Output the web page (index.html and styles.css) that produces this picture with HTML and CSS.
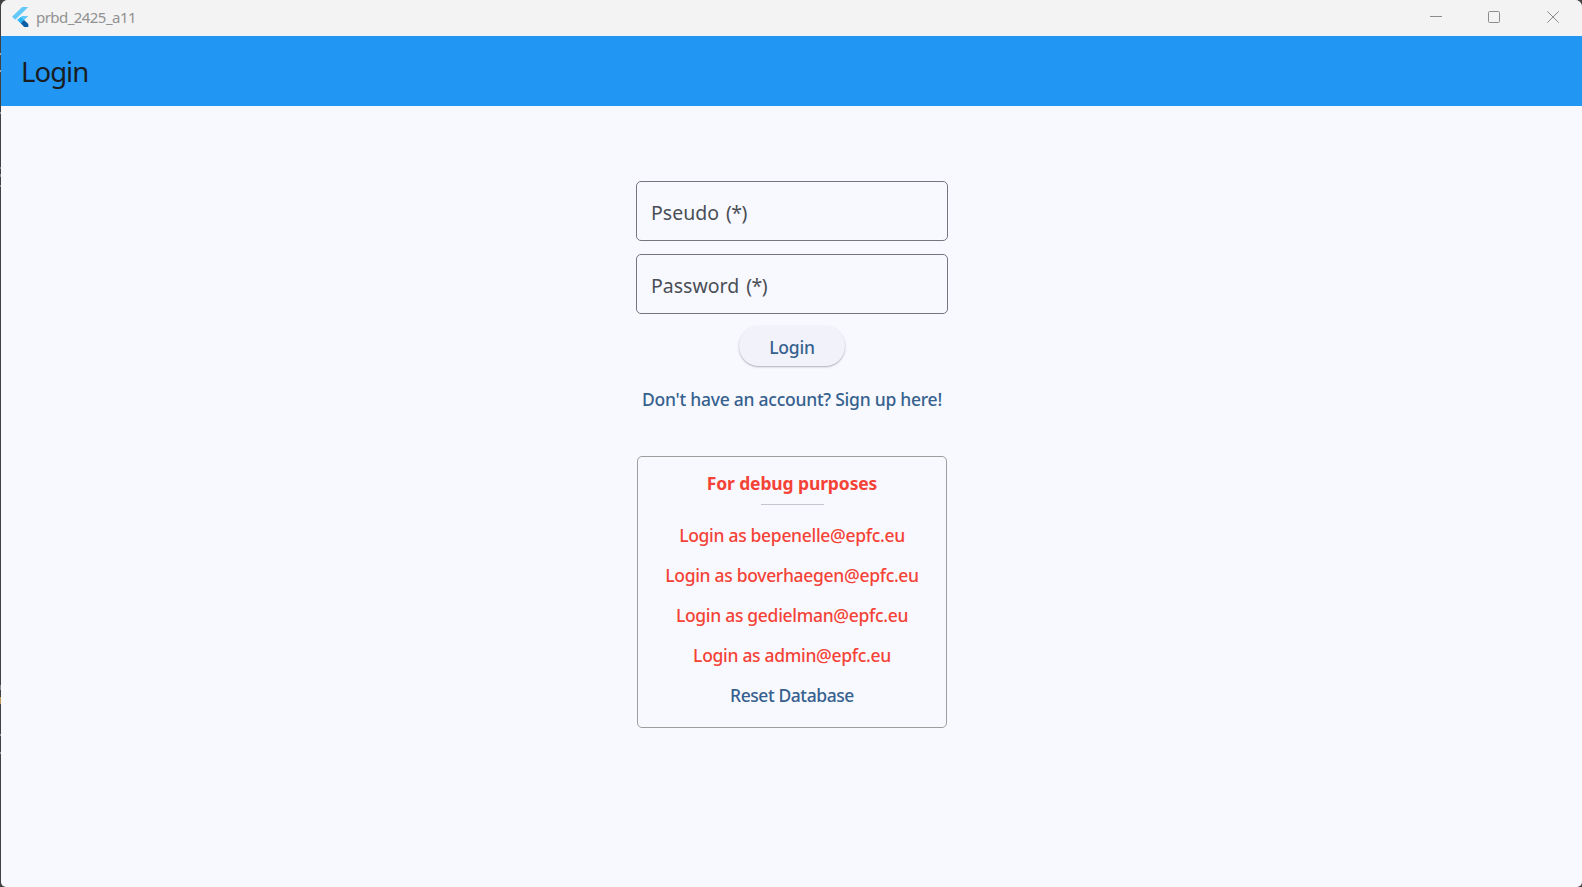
FILE: index.html
```html
<!DOCTYPE html>
<html lang="en">
<head>
<meta charset="utf-8">
<title>prbd_2425_a11</title>
<link rel="stylesheet" href="styles.css">
</head>
<body>
<div class="window">
  <header class="titlebar">
    <svg class="logo" width="17" height="20" viewBox="0 0 17 20">
      <path d="M10.2 0H16.3L3.3 12.8L0 9.8Z" fill="#62c9f8"/>
      <path d="M10.2 9H16.3L8.8 16.2L5.4 13Z" fill="#62c9f8"/>
      <path d="M5.4 13L8.7 9.9L12 13L8.7 16.2Z" fill="#29b6f6"/>
      <path d="M8.7 16.2L12 13L16.3 17V20H12.2Z" fill="#0a5fa5"/>
    </svg>
    <span class="app-name">prbd_2425_a11</span>
    <div class="controls">
      <svg width="12" height="12" viewBox="0 0 12 12"><path d="M0 5.5H12"/></svg>
      <svg width="12" height="12" viewBox="0 0 12 12"><rect x=".5" y=".5" width="11" height="11" rx="1.2"/></svg>
      <svg class="close" width="12" height="12" viewBox="0 0 12 12"><path d="M.3.3L11.7 11.7M11.7.3L.3 11.7"/></svg>
    </div>
  </header>
  <div class="appbar"><h1 class="heading">Login</h1></div>
  <main class="content">
    <div class="field">Pseudo <span class="mark">(*)</span></div>
    <div class="field">Password <span class="mark">(*)</span></div>
    <button class="login">Login</button>
    <a class="signup">Don't have an account? Sign up here!</a>
    <section class="debug">
      <h2 class="debug-title">For debug purposes</h2>
      <hr class="divider">
      <a class="row">Login as bepenelle@epfc.eu</a>
      <a class="row">Login as boverhaegen@epfc.eu</a>
      <a class="row">Login as gedielman@epfc.eu</a>
      <a class="row">Login as admin@epfc.eu</a>
      <a class="row reset">Reset Database</a>
    </section>
  </main>
</div>
</body>
</html>
```
FILE: styles.css
```css
* { box-sizing: border-box; }
body {
  margin: 0;
  height: 887px;
  padding-left: 1px;
  overflow: hidden;
  /* desktop behind the window, with a few light flecks along the left edge */
  background:
    linear-gradient(#aaa, #aaa) 0 53px / 1px 2px no-repeat,
    linear-gradient(#aaa, #aaa) 0 70px / 1px 2px no-repeat,
    linear-gradient(#999, #999) 0 112px / 1px 2px no-repeat,
    linear-gradient(#888, #888) 0 167px / 1px 2px no-repeat,
    linear-gradient(#888, #888) 0 174px / 1px 3px no-repeat,
    linear-gradient(#888, #888) 0 185px / 1px 2px no-repeat,
    linear-gradient(#888, #888) 0 685px / 1px 5px no-repeat,
    linear-gradient(#c09a58, #c09a58) 0 697px / 1px 7px no-repeat,
    linear-gradient(#999, #999) 0 734px / 1px 2px no-repeat,
    linear-gradient(#999, #999) 0 752px / 1px 2px no-repeat,
    #414143;
  font-family: "Noto Sans", "Open Sans", sans-serif;
}
.window {
  height: 887px;
  display: flex;
  flex-direction: column;
  overflow: hidden;
  border-radius: 7px 7px 5px 5px;
  background: #f8f9ff;
}
.titlebar {
  height: 36px;
  flex: none;
  display: flex;
  align-items: center;
  padding: 0 23px 0 11px;
  background: #f3f3f3;
}
.logo { margin-top: -2px; }
.app-name {
  margin: -2px 0 0 7px;
  font-size: 15px;
  line-height: 36px;
  letter-spacing: -.55px;
  color: #919191;
}
.controls {
  display: flex;
  gap: 46px;
  margin: -2px 0 0 auto;
}
.controls svg { fill: none; stroke: #8c8c8c; stroke-width: 1; }
.controls .close { margin-left: 1px; }
.appbar {
  height: 70px;
  flex: none;
  padding-left: 20px;
  background: #2196f3;
}
.heading {
  margin: 0;
  font-size: 27.5px;
  font-weight: 400;
  line-height: 72px;
  letter-spacing: -.95px;
  color: #191c20;
}
.content {
  display: flex;
  flex-direction: column;
  align-items: center;
  padding: 75px 0 0 1px;
}
.field {
  width: 312px;
  height: 60px;
  margin-bottom: 12.5px;
  padding: 0 0 0 14px;
  border: 1.25px solid #73777f;
  border-radius: 5px;
  font-size: 19.5px;
  line-height: 62px;
  word-spacing: 2px;
  color: #4a4e55;
}
.mark { letter-spacing: -.6px; }
.login {
  width: 106px;
  height: 40px;
  border: 0;
  border-radius: 20px;
  background: #f2f3fa;
  box-shadow: 0 1px 2px rgba(0, 0, 0, .3);
  font: 500 17.5px/42px "Noto Sans", "Open Sans", sans-serif;
  letter-spacing: -.2px;
  color: #36618e;
  padding: 0;
}
.signup {
  margin-top: 13px;
  font-size: 17.5px;
  font-weight: 500;
  line-height: 40px;
  letter-spacing: -.25px;
  color: #36618e;
}
.debug {
  width: 310px;
  height: 272px;
  margin-top: 37px;
  display: flex;
  flex-direction: column;
  align-items: center;
  border: 1.25px solid #9e9e9e;
  border-radius: 5px;
}
.debug-title {
  margin: 14px 0 0;
  font-size: 17.5px;
  font-weight: 700;
  line-height: 24px;
  letter-spacing: -.12px;
  color: #f44336;
}
.divider {
  width: 63px;
  height: 1px;
  margin: 9px 0 10px;
  border: 0;
  background: #c3c6cf;
}
.row {
  height: 40px;
  font-size: 17.5px;
  font-weight: 500;
  line-height: 40px;
  letter-spacing: -.31px;
  color: #f44336;
}
.reset {
  letter-spacing: -.42px;
  color: #36618e;
}
```
